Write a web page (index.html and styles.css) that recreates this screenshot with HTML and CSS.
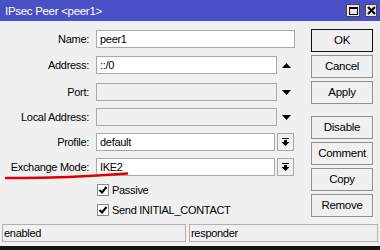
FILE: index.html
```html
<!DOCTYPE html>
<html>
<head>
<meta charset="utf-8">
<link rel="stylesheet" href="styles.css">
</head>
<body>
<div class="window">
  <div class="titlebar">
    <span class="title">IPsec Peer &lt;peer1&gt;</span>
    <div class="tb-buttons">
      <span class="tb-btn"><span class="max-glyph"></span></span>
      <span class="tb-btn close"><svg width="9" height="9" viewBox="0 0 9 9"><path d="M1,1 L8,8 M8,1 L1,8" stroke="#000" stroke-width="2" fill="none"/></svg></span>
    </div>
  </div>
  <div class="main">
    <div class="form">
      <div class="row">
        <span class="label">Name:</span>
        <span class="field w-full">peer1</span>
      </div>
      <div class="row gap8">
        <span class="label">Address:</span>
        <span class="field w-arrow">::/0</span>
        <span class="arrow"><svg width="9" height="5" viewBox="0 0 9 5"><polygon points="0,5 9,5 4.5,0" fill="#000"/></svg></span>
      </div>
      <div class="row gap9">
        <span class="label">Port:</span>
        <span class="field w-arrow disabled"></span>
        <span class="arrow"><svg width="9" height="5" viewBox="0 0 9 5"><polygon points="0,0 9,0 4.5,5" fill="#000"/></svg></span>
      </div>
      <div class="row gap7">
        <span class="label">Local Address:</span>
        <span class="field w-arrow disabled"></span>
        <span class="arrow"><svg width="9" height="5" viewBox="0 0 9 5"><polygon points="0,0 9,0 4.5,5" fill="#000"/></svg></span>
      </div>
      <div class="row gap7">
        <span class="label">Profile:</span>
        <span class="field w-drop">default</span>
        <span class="drop-btn"><svg width="9" height="9" viewBox="0 0 9 9"><rect x="1" y="0" width="7" height="1" fill="#000"/><rect x="3" y="2" width="3" height="2" fill="#000"/><polygon points="0.5,4 8.5,4 4.5,8" fill="#000"/></svg></span>
      </div>
      <div class="row gap7">
        <span class="label">Exchange Mode:</span>
        <span class="field w-drop">IKE2</span>
        <span class="drop-btn"><svg width="9" height="9" viewBox="0 0 9 9"><rect x="1" y="0" width="7" height="1" fill="#000"/><rect x="3" y="2" width="3" height="2" fill="#000"/><polygon points="0.5,4 8.5,4 4.5,8" fill="#000"/></svg></span>
      </div>
      <div class="check-row">
        <span class="checkbox"><svg width="10" height="10" viewBox="0 0 10 10"><path d="M1.5,5 L4,7.5 L8.5,2" stroke="#000" stroke-width="2" fill="none"/></svg></span>
        <span class="check-label">Passive</span>
      </div>
      <div class="check-row">
        <span class="checkbox"><svg width="10" height="10" viewBox="0 0 10 10"><path d="M1.5,5 L4,7.5 L8.5,2" stroke="#000" stroke-width="2" fill="none"/></svg></span>
        <span class="check-label">Send INITIAL_CONTACT</span>
      </div>
    </div>
    <div class="buttons">
      <span class="btn default">OK</span>
      <span class="btn">Cancel</span>
      <span class="btn">Apply</span>
      <span class="btn sep">Disable</span>
      <span class="btn">Comment</span>
      <span class="btn">Copy</span>
      <span class="btn">Remove</span>
    </div>
  </div>
  <div class="statusbar">
    <span class="panel p1">enabled</span>
    <span class="panel p2">responder</span>
  </div>
  <svg class="annotation" width="380" height="250" viewBox="0 0 380 250">
    <path d="M6,178 Q60,178.5 127,173.5" stroke="#e00000" stroke-width="2.6" fill="none" stroke-linecap="round"/>
  </svg>
</div>
</body>
</html>
```

FILE: styles.css
```css
* { box-sizing: border-box; }
html, body {
  margin: 0;
  width: 380px;
  height: 250px;
  overflow: hidden;
}
body {
  font-family: "Liberation Sans", Arial, sans-serif;
  font-size: 11px;
  letter-spacing: -0.3px;
  color: #000;
  background: #f0f0f0;
}
.window {
  position: relative;
  width: 380px;
  height: 250px;
  background: #f0f0f0;
  display: flex;
  flex-direction: column;
  border-bottom: 4px solid #141414;
}
.titlebar {
  height: 21px;
  flex: none;
  background: #4b4fc6;
  color: #fff;
  display: flex;
  align-items: center;
  justify-content: space-between;
  padding: 0 3px 0 5px;
}
.title { font-size: 11.5px; }
.tb-buttons {
  display: flex;
  gap: 5px;
  align-items: center;
}
.tb-btn {
  width: 14px;
  height: 13px;
  background: #e6e6e6;
  border: 1px solid #444;
  display: flex;
  align-items: center;
  justify-content: center;
}
.tb-btn.close { width: 12px; }
.max-glyph {
  width: 9px;
  height: 8px;
  border: 1px solid #000;
  border-top-width: 2px;
}
.main {
  display: flex;
  padding-top: 8px;
}
.form {
  width: 296px;
  padding-top: 1px;
}
.row {
  display: flex;
  align-items: center;
  height: 18px;
}
.gap7 { margin-top: 7px; }
.gap8 { margin-top: 8px; }
.gap9 { margin-top: 9px; }
.label {
  width: 89px;
  margin-right: 7px;
  text-align: right;
  white-space: nowrap;
}
.field {
  height: 18px;
  border: 1px solid #a8a8a8;
  background: #fff;
  padding: 0 3px;
  line-height: 16px;
  white-space: nowrap;
}
.field.disabled { background: #f0f0f0; }
.w-full { width: 199px; }
.w-arrow { width: 181px; }
.w-drop { width: 179px; }
.arrow {
  width: 18px;
  display: flex;
  justify-content: center;
  padding-left: 1px;
}
.drop-btn {
  width: 17px;
  height: 18px;
  margin-left: 2px;
  border: 1px solid #a8a8a8;
  background: #f0f0f0;
  display: flex;
  align-items: center;
  justify-content: center;
}
.check-row {
  display: flex;
  align-items: center;
  height: 12px;
  margin-top: 8px;
  padding-left: 97px;
}
.checkbox {
  width: 12px;
  height: 12px;
  border: 1px solid #8a8a8a;
  background: #fff;
  display: flex;
  align-items: center;
  justify-content: center;
}
.check-label {
  margin-left: 3px;
  font-size: 11px;
}
.buttons {
  display: flex;
  flex-direction: column;
  gap: 3px;
  margin-left: 15px;
  width: 62px;
}
.btn {
  height: 23px;
  border: 1px solid #8f8f8f;
  background: #f0f0f0;
  text-align: center;
  line-height: 21px;
  font-size: 11.5px;
}
.btn.default { border-color: #111; }
.btn.sep { margin-top: 9px; }
.statusbar {
  margin-top: auto;
  margin-bottom: 4px;
  display: flex;
  gap: 3px;
  padding-left: 2px;
}
.panel {
  height: 18px;
  border: 1px solid #b0b0b0;
  background: #f0f0f0;
  line-height: 16px;
  padding-left: 1px;
}
.p1 { width: 184px; }
.p2 { width: 189px; }
.annotation {
  position: absolute;
  left: 0;
  top: 0;
  pointer-events: none;
}
```
